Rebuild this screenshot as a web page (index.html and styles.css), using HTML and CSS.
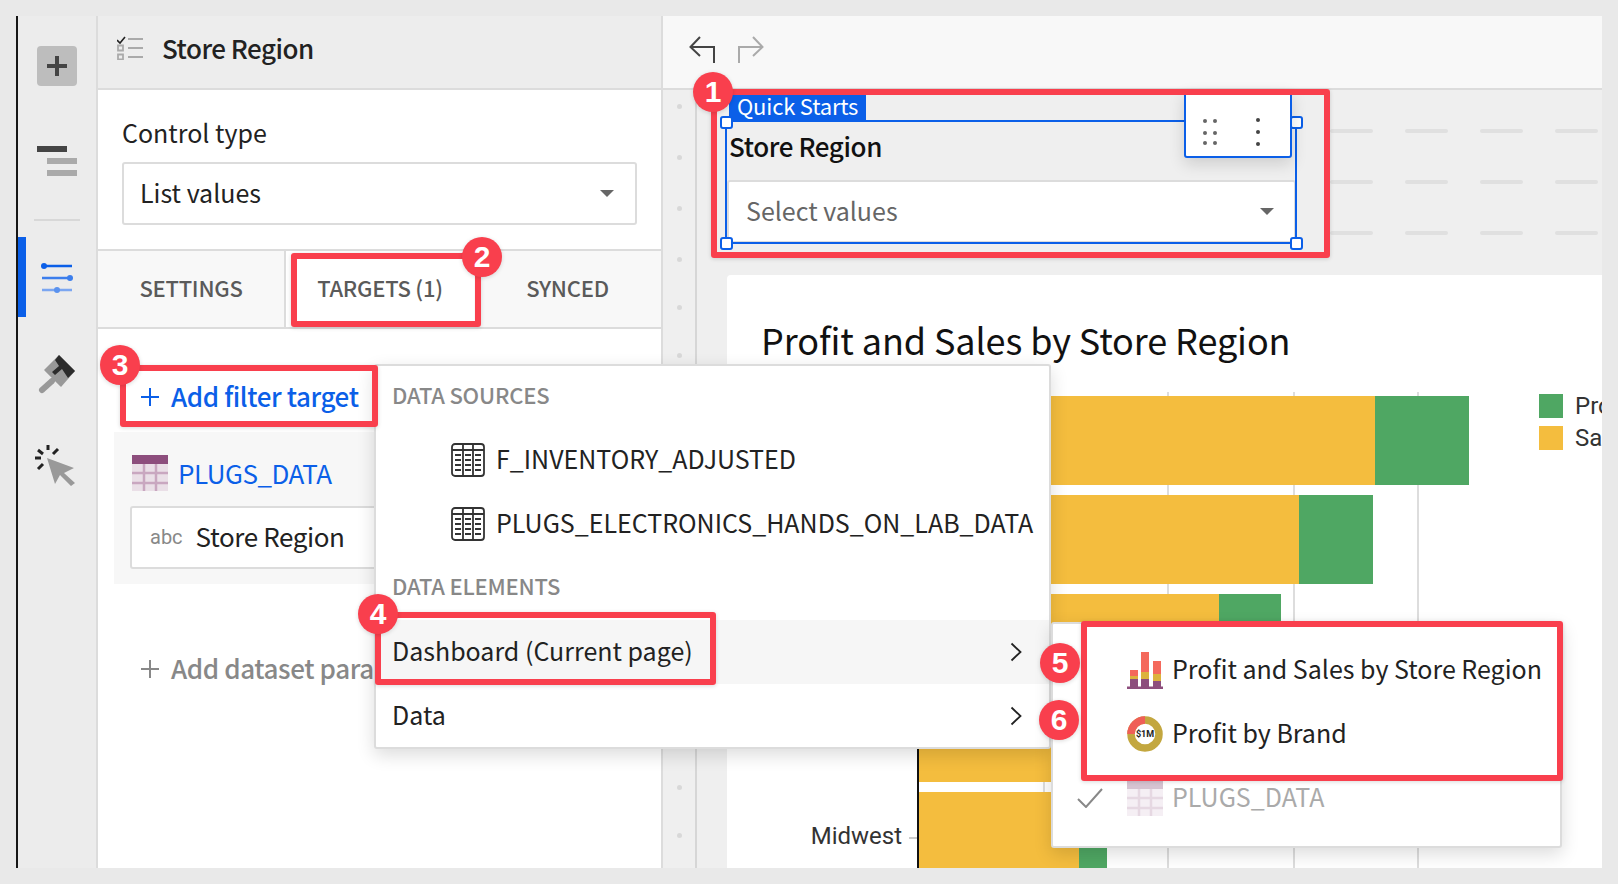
FILE: index.html
```html
<!DOCTYPE html>
<html>
    <head>
        <title>Store Region</title>
        <meta charset="UTF-8">
        <link rel="stylesheet" href="styles.css">
    </head>
    <body>
        <div class="app">
            <nav class="rail">
                <div class="rail_add">
                    <svg width="20" height="20" viewBox="0 0 20 20"><path d="M8 0h4v8h8v4h-8v8H8v-8H0V8h8z" fill="#444"/></svg>
                </div>
                <svg class="rail_layers" width="40" height="30" viewBox="0 0 40 30"><rect width="30" height="6" fill="#444"/><rect x="10" y="12" width="30" height="6" fill="#aaa"/><rect x="10" y="24" width="30" height="6" fill="#aaa"/></svg>
                <div class="rail_rule"></div>
                <div class="rail_active">
                    <svg width="32" height="30" viewBox="0 0 32 30"><path d="M2 3h29" stroke="#0b5fe8" stroke-width="2.500"/><circle cx="3" cy="3" r="3" fill="#0b5fe8"/><path d="M1 15h30" stroke="#3c7eec" stroke-width="2.500"/><circle cx="29" cy="15" r="3" fill="#3c7eec"/><path d="M1 27h30" stroke="#7ba6f1" stroke-width="2.500"/><circle cx="16" cy="27" r="3" fill="#5a92ee"/></svg>
                </div>
                <svg class="rail_brush" width="40" height="40" viewBox="0 0 40 40"><path d="M21 0l16 16-14 16L6 15z" fill="#999"/><path d="M21 0l16 16-7 7-6-9-7 6-3-3 7-6-4-6z" fill="#2c2c2c"/><path d="M7 16l15 15" stroke="#bbb" stroke-width="1"/><path d="M14 26L4 35" stroke="#999" stroke-width="6" stroke-linecap="round"/></svg>
                <svg class="rail_click" width="42" height="42" viewBox="0 0 42 42"><path d="M13 13l27 10-10 5 11 10-4 3-11-11-5 9z" fill="#999"/><path d="M14 0v5M1 13h6M4 5l5 4M24 4l-5 5M4 24l5-5" stroke="#222" stroke-width="3" fill="none"/></svg>
            </nav>

            <section class="panel">
                <header class="panel_head">
                    <svg width="26" height="24" viewBox="0 0 26 24"><path d="M0 4l3 3 5-6" stroke="#222" stroke-width="1.600" fill="none"/><path d="M11 3h15M11 12h15M11 21h15" stroke="#aaa" stroke-width="2"/><path d="M1 9.500h5v5H1zM1 18.500h5v5H1z" stroke="#aaa" stroke-width="1.800" fill="none"/></svg>
                    <h1>Store Region</h1>
                </header>
                <div class="control_type">
                    <label>Control type</label>
                    <div class="select">
                        <span>List values</span>
                        <i class="caret"></i>
                    </div>
                </div>
                <div class="tabs">
                    <div class="tab tab_first">SETTINGS</div>
                    <div class="tab">TARGETS (1)</div>
                    <div class="tab">SYNCED</div>
                </div>
                <div class="add_row add_blue">
                    <svg width="18" height="18" viewBox="0 0 18 18"><path d="M9 0v18M0 9h18" stroke="currentColor" stroke-width="2"/></svg>
                    <span>Add filter target</span>
                </div>
                <div class="target">
                    <div class="target_name">
                        <svg width="36" height="36" viewBox="0 0 36 36"><rect width="36" height="36" fill="#eadfe7"/><rect width="36" height="9" fill="#8d4e7d"/><path d="M0 18h36M0 28h36M12 9v27M24 9v27" stroke="#c9a7c0" stroke-width="2.500"/></svg>
                        <span>PLUGS_DATA</span>
                    </div>
                    <div class="target_field">
                        <span class="abc">abc</span>
                        <span class="field_name">Store Region</span>
                    </div>
                </div>
                <div class="add_row add_gray">
                    <svg width="18" height="18" viewBox="0 0 18 18"><path d="M9 0v18M0 9h18" stroke="currentColor" stroke-width="2"/></svg>
                    <span>Add dataset para</span>
                </div>
            </section>

            <main class="workbook">
                <div class="toolbar">
                    <svg width="26" height="27" viewBox="0 0 26 27"><path d="M25 27V11H2M11 1L1.500 11l9.500 9" stroke="#444" stroke-width="2" fill="none"/></svg>
                    <svg width="26" height="27" viewBox="0 0 26 27"><path d="M1 27V11h23M15 1l9.500 10-9.500 9" stroke="#aaa" stroke-width="2" fill="none"/></svg>
                </div>
                <div class="canvas">
                    <div class="gutter">
                        <i></i><i></i><i></i><i></i><i></i><i></i><i></i><i></i><i></i><i></i><i></i><i></i><i></i><i></i><i></i><i></i>
                    </div>
                    <div class="sheet">
                        <div class="top_area">
                            <div class="control">
                                <div class="control_title">Store Region</div>
                                <div class="select select_values">
                                    <span>Select values</span>
                                    <i class="caret"></i>
                                </div>
                            </div>
                            <div class="dashes">
                                <div class="dash_row"><i></i><i></i><i></i><i></i></div>
                                <div class="dash_row"><i></i><i></i><i></i><i></i></div>
                                <div class="dash_row"><i></i><i></i><i></i><i></i></div>
                            </div>
                        </div>
                        <div class="card">
                            <h2>Profit and Sales by Store Region</h2>
                            <div class="chart">
                                <div class="ylabels"><span class="midwest">Midwest</span></div>
                                <div class="plot">
                                    <i class="grid g1"></i><i class="grid g2"></i><i class="grid g3"></i><i class="grid g4"></i>
                                    <div class="bar"><i class="sales" style="width:456px"></i><i class="profit" style="width:94px"></i></div>
                                    <div class="bar"><i class="sales" style="width:380px"></i><i class="profit" style="width:74px"></i></div>
                                    <div class="bar"><i class="sales" style="width:300px"></i><i class="profit" style="width:62px"></i></div>
                                    <div class="bar"><i class="sales" style="width:300px"></i><i class="profit" style="width:40px"></i></div>
                                    <div class="bar"><i class="sales" style="width:160px"></i><i class="profit" style="width:28px"></i></div>
                                </div>
                                <div class="legend">
                                    <div><i class="profit"></i>Profit</div>
                                    <div><i class="sales"></i>Sales</div>
                                </div>
                            </div>
                        </div>
                    </div>
                </div>
            </main>

            <!-- things on top of the page -->
            <div class="tag">Quick Starts</div>
            <div class="selection"></div>
            <i class="handle h_tl"></i><i class="handle h_tr"></i><i class="handle h_bl"></i><i class="handle h_br"></i>
            <div class="mini_bar">
                <svg width="14" height="26" viewBox="0 0 14 26"><g fill="#666"><circle cx="2" cy="2" r="2"/><circle cx="12" cy="2" r="2"/><circle cx="2" cy="14" r="2"/><circle cx="12" cy="14" r="2"/><circle cx="2" cy="24" r="2"/><circle cx="12" cy="24" r="2"/></g></svg>
                <svg width="4" height="28" viewBox="0 0 4 28"><g fill="#444"><circle cx="2" cy="2" r="2"/><circle cx="2" cy="14" r="2"/><circle cx="2" cy="26" r="2"/></g></svg>
            </div>

            <div class="menu">
                <div class="menu_head menu_head_first">DATA SOURCES</div>
                <div class="menu_item item_indent">
                    <svg class="sheet_icon" width="34" height="34" viewBox="0 0 34 34"><use href="#sheet"/></svg>
                    <span>F_INVENTORY_ADJUSTED</span>
                </div>
                <div class="menu_item item_indent">
                    <svg class="sheet_icon" width="34" height="34" viewBox="0 0 34 34"><use href="#sheet"/></svg>
                    <span>PLUGS_ELECTRONICS_HANDS_ON_LAB_DATA</span>
                </div>
                <div class="menu_head">DATA ELEMENTS</div>
                <div class="menu_item item_hover">
                    <span>Dashboard (Current page)</span>
                    <svg class="chevron" width="12" height="20" viewBox="0 0 12 20"><path d="M1.500 1.500l9 8.500-9 8.500" stroke="#222" stroke-width="1.800" fill="none"/></svg>
                </div>
                <div class="menu_item">
                    <span>Data</span>
                    <svg class="chevron" width="12" height="20" viewBox="0 0 12 20"><path d="M1.500 1.500l9 8.500-9 8.500" stroke="#222" stroke-width="1.800" fill="none"/></svg>
                </div>
            </div>

            <div class="submenu">
                <div class="sub_item">
                    <svg width="36" height="37" viewBox="0 0 36 37"><path d="M3 18h8v6H3zM14 0h8v20h-8zM26 9h8v13h-8z" fill="#f4695c"/><path d="M3 24h8v3H3zM14 20h8v7h-8zM26 22h8v7h-8z" fill="#dcb23c"/><path d="M3 27h8v8H3zM14 27h8v8h-8zM26 29h8v6h-8z" fill="#8d4e7d"/><rect y="34.500" width="36" height="2.500" fill="#8d4e7d"/></svg>
                    <span>Profit and Sales by Store Region</span>
                </div>
                <div class="sub_item">
                    <svg width="36" height="36" viewBox="0 0 36 36"><circle cx="18" cy="18" r="14" fill="none" stroke="#c3a73f" stroke-width="7.500"/><path d="M4 18A14 14 0 0 1 18 4" fill="none" stroke="#ef5f57" stroke-width="7.500"/><text x="18" y="21" text-anchor="middle" class="donut_text">$1M</text></svg>
                    <span>Profit by Brand</span>
                </div>
                <div class="sub_item sub_off">
                    <svg class="check" width="26" height="20" viewBox="0 0 26 20"><path d="M1 11l8 8L25 1" stroke="#888" stroke-width="2" fill="none"/></svg>
                    <svg width="36" height="36" viewBox="0 0 36 36"><rect width="36" height="36" fill="#f5eff4"/><rect width="36" height="9" fill="#d6c3d1"/><path d="M0 18h36M0 28h36M12 9v27M24 9v27" stroke="#e6d8e2" stroke-width="2.500"/></svg>
                    <span>PLUGS_DATA</span>
                </div>
            </div>

            <div class="box box1"></div>
            <div class="box box2"></div>
            <div class="box box3"></div>
            <div class="box box4"></div>
            <div class="box box5"></div>
            <div class="badge b1">1</div>
            <div class="badge b2">2</div>
            <div class="badge b3">3</div>
            <div class="badge b4">4</div>
            <div class="badge b5">5</div>
            <div class="badge b6">6</div>
        </div>

        <svg width="0" height="0" class="defs">
            <symbol id="sheet" viewBox="0 0 34 34">
                <rect x="1" y="1" width="32" height="32" rx="3" fill="none" stroke="#333" stroke-width="1.800"/>
                <path d="M1 7h32M12 1v32M22 1v32" stroke="#333" stroke-width="1.800" fill="none"/>
                <path d="M4 12h6M4 17h6M4 22h6M4 27h6M14 12h6M14 17h6M14 22h6M14 27h6M24 12h6M24 17h6M24 22h6M24 27h6" stroke="#333" stroke-width="1.800"/>
            </symbol>
        </svg>
    </body>
</html>
```

FILE: styles.css
```css
* {
    box-sizing: border-box;
}
html, body {
    margin: 0;
    height: 100%;
    overflow: hidden;
}
body {
    background-color: #e9e9e9;
    font-family: "Noto Sans CJK SC", "Noto Sans", sans-serif;
    color: #222;
}
i {
    display: block;
}
.defs {
    position: absolute;
}
.app {
    position: absolute;
    left: 16px;
    top: 16px;
    width: 1586px;
    height: 852px;
    display: flex;
    overflow: hidden;
    background-color: #fff;
}

/* left rail */
.rail {
    width: 82px;
    flex: none;
    background-color: #ececec;
    border-left: 2px solid #161616;
    border-right: 2px solid #dcdcdc;
    display: flex;
    flex-direction: column;
}
.rail_add {
    width: 40px;
    height: 40px;
    margin: 30px 0 0 19px;
    background-color: #bdbdbd;
    border-radius: 4px;
    display: flex;
    align-items: center;
    justify-content: center;
}
.rail_layers {
    margin: 60px 0 0 19px;
}
.rail_rule {
    height: 2px;
    width: 46px;
    margin: 43px 0 0 16px;
    background-color: #d8d8d8;
}
.rail_active {
    height: 80px;
    margin-top: 16px;
    border-left: 8px solid #0b5fe8;
    padding: 26px 0 0 15px;
}
.rail_brush {
    margin: 38px 0 0 20px;
}
.rail_click {
    margin: 50px 0 0 16px;
}

/* panel */
.panel {
    width: 565px;
    flex: none;
    background-color: #fff;
    border-right: 2px solid #dcdcdc;
    display: flex;
    flex-direction: column;
}
.panel_head {
    height: 74px;
    flex: none;
    background-color: #ededed;
    border-bottom: 2px solid #dcdcdc;
    display: flex;
    align-items: center;
    padding: 0 0 8px 19px;
    gap: 19px;
}
h1 {
    margin: 0;
    font-size: 26px;
    line-height: 34px;
    font-weight: 500;
    letter-spacing: -0.5px;
}
.control_type {
    height: 159px;
    flex: none;
    padding: 24px 24px 0 24px;
}
.control_type label {
    display: block;
    font-size: 25px;
    line-height: 36px;
}
.select {
    height: 63px;
    margin-top: 12px;
    background-color: #fff;
    border: 2px solid #dcdcdc;
    border-radius: 3px;
    display: flex;
    align-items: center;
    justify-content: space-between;
    padding: 0 21px 0 16px;
    font-size: 25px;
}
.select span {
    margin-bottom: 3px;
}
.caret {
    width: 0;
    height: 0;
    border-left: 7px solid transparent;
    border-right: 7px solid transparent;
    border-top: 7px solid #666;
}
.tabs {
    height: 80px;
    flex: none;
    display: flex;
    border-top: 2px solid #dcdcdc;
    border-bottom: 2px solid #dcdcdc;
}
.tab {
    display: flex;
    align-items: center;
    justify-content: center;
    font-size: 22px;
    font-weight: 500;
    color: #5a5a5a;
    letter-spacing: -0.25px;
    padding-bottom: 4px;
}
.tab_first {
    width: 188px;
    background-color: #f8f8f8;
    border-right: 2px solid #dcdcdc;
}
.tab + .tab {
    width: 188px;
}
.tab + .tab + .tab {
    width: 187px;
    background-color: #f8f8f8;
}
.add_row {
    display: flex;
    align-items: center;
    gap: 12px;
    padding-left: 43px;
    font-size: 26px;
    font-weight: 500;
    letter-spacing: -0.4px;
}
.add_row span {
    margin-bottom: 3px;
}
.add_blue {
    height: 103px;
    flex: none;
    padding-top: 33px;
    color: #0b5fe8;
}
.add_gray {
    height: 50px;
    flex: none;
    margin-top: 60px;
    color: #888;
    white-space: nowrap;
}
.target {
    height: 152px;
    flex: none;
    margin: 0 0 0 16px;
    background-color: #f7f7f7;
    padding: 22px 0 0 16px;
}
.target_name {
    display: flex;
    align-items: center;
    gap: 10px;
    font-size: 26px;
    color: #0b5fe8;
    margin-left: 2px;
    letter-spacing: -0.5px;
}
.target_field {
    height: 63px;
    margin-top: 15px;
    background-color: #fff;
    border: 2px solid #dcdcdc;
    border-radius: 3px;
    display: flex;
    align-items: center;
    gap: 13px;
    padding-left: 18px;
    font-size: 26px;
}
.field_name {
    letter-spacing: -0.4px;
    margin-bottom: 4px;
}
.abc {
    font-family: Roboto, sans-serif;
    font-size: 20px;
    color: #888;
    margin-bottom: 2px;
}

/* workbook */
.workbook {
    flex: 1;
    display: flex;
    flex-direction: column;
    min-width: 0;
}
.toolbar {
    height: 74px;
    flex: none;
    background-color: #f8f8f8;
    border-bottom: 2px solid #dcdcdc;
    display: flex;
    align-items: center;
    gap: 23px;
    padding: 0 0 6px 26px;
}
.canvas {
    flex: 1;
    display: flex;
    background-color: #efefef;
    min-height: 0;
}
.gutter {
    width: 34px;
    flex: none;
    border-right: 2px solid #d6d6d6;
    display: flex;
    flex-direction: column;
    align-items: center;
    gap: 43px;
    padding-top: 14px;
    overflow: hidden;
}
.gutter i {
    flex: none;
    width: 5px;
    height: 5px;
    border-radius: 50%;
    background-color: #d8d8d8;
}
.gutter i:nth-child(-n+3) {
    margin-bottom: 3px;
}
.sheet {
    flex: 1;
    min-width: 0;
    display: flex;
    flex-direction: column;
}
.top_area {
    height: 185px;
    flex: none;
    position: relative;
}
.control {
    width: 569px;
    padding: 30px 0 0 0;
    margin-left: 30px;
}
.control_title {
    font-size: 26px;
    line-height: 34px;
    font-weight: 500;
    color: #111;
    padding: 9px 0 0 2px;
    letter-spacing: -0.4px;
}
.select_values {
    height: 63px;
    margin-top: 17px;
    color: #666;
    padding-left: 17px;
    padding-right: 20px;
}
.dashes {
    position: absolute;
    left: 633px;
    top: 39px;
    display: flex;
    flex-direction: column;
    gap: 47px;
}
.dash_row {
    display: flex;
    gap: 32px;
}
.dash_row i {
    width: 43px;
    height: 4px;
    border-radius: 2px;
    background-color: #e0e0e0;
}
.card {
    flex: 1;
    margin-left: 30px;
    background-color: #fff;
    border-radius: 4px 0 0 0;
    min-height: 0;
    overflow: hidden;
    padding: 41px 0 0 34px;
}
h2 {
    margin: 0;
    font-size: 36px;
    line-height: 46px;
    font-weight: 400;
    color: #111;
    letter-spacing: -0.1px;
}
.chart {
    display: flex;
    margin-top: 34px;
}
.ylabels {
    width: 156px;
    flex: none;
    height: 480px;
    position: relative;
    font-family: Roboto, sans-serif;
    font-size: 24px;
    color: #333;
}
.midwest {
    position: absolute;
    right: 15px;
    top: 426px;
}
.midwest::after {
    content: "";
    position: absolute;
    left: 100%;
    top: 15px;
    margin-left: 7px;
    width: 8px;
    height: 2px;
    background-color: #ccc;
}
.plot {
    width: 620px;
    flex: none;
    position: relative;
    border-left: 2px solid #111;
    display: flex;
    flex-direction: column;
    gap: 10px;
}
.grid {
    position: absolute;
    top: -4px;
    height: 500px;
    width: 2px;
    background-color: #ddd;
}
.g1 { left: 124px; }
.g2 { left: 248px; }
.g3 { left: 374px; }
.g4 { left: 498px; }
.bar {
    height: 89px;
    flex: none;
    display: flex;
    position: relative;
}
.sales {
    background-color: #f4bd3e;
}
.profit {
    background-color: #4fa763;
}
.legend {
    flex: none;
    margin: -2px 0 0 2px;
    font-family: Roboto, sans-serif;
    font-size: 24px;
    color: #333;
    display: flex;
    flex-direction: column;
    gap: 8px;
}
.legend div {
    display: flex;
    align-items: center;
    gap: 12px;
    line-height: 24px;
}
.legend i {
    width: 24px;
    height: 24px;
}

/* popups */
.tag {
    position: absolute;
    left: 713px;
    top: 79px;
    width: 137px;
    height: 26px;
    background-color: #0b5fe8;
    color: #fff;
    font-size: 22px;
    line-height: 20px;
    padding-left: 8px;
    letter-spacing: -0.2px;
}
.selection {
    position: absolute;
    left: 709px;
    top: 104px;
    width: 572px;
    height: 124px;
    border: 2px solid #0b5fe8;
}
.handle {
    position: absolute;
    width: 13px;
    height: 13px;
    background-color: #fff;
    border: 2px solid #0b5fe8;
    border-radius: 3px;
}
.h_tl { left: 704px; top: 100px; }
.h_tr { left: 1274px; top: 100px; }
.h_bl { left: 704px; top: 221px; }
.h_br { left: 1274px; top: 221px; }
.mini_bar {
    position: absolute;
    left: 1168px;
    top: 74px;
    width: 108px;
    height: 68px;
    background-color: #fff;
    border: 2px solid #0b5fe8;
    border-radius: 3px;
    box-shadow: 0 6px 16px rgba(0, 0, 0, 0.14);
    display: flex;
    align-items: center;
    gap: 39px;
    padding: 16px 0 0 17px;
}
.menu {
    position: absolute;
    left: 358px;
    top: 348px;
    width: 677px;
    height: 385px;
    background-color: #fff;
    border: 2px solid #dcdcdc;
    border-radius: 3px;
    box-shadow: 0 6px 18px rgba(0, 0, 0, 0.14);
    font-size: 25px;
}
.menu_head {
    height: 64px;
    display: flex;
    align-items: center;
    padding: 0 0 6px 16px;
    font-size: 22px;
    font-weight: 500;
    color: #888;
    letter-spacing: -0.2px;
    white-space: nowrap;
}
.menu_head_first {
    height: 62px;
}
.menu_item {
    height: 64px;
    display: flex;
    align-items: center;
    justify-content: space-between;
    padding: 0 27px 0 16px;
    white-space: nowrap;
}
.menu_item span {
    margin-bottom: 4px;
}
.item_indent {
    justify-content: flex-start;
    gap: 11px;
    padding-left: 75px;
}
.sheet_icon {
    flex: none;
}
.item_hover {
    background-color: #f6f6f6;
}
.submenu {
    position: absolute;
    left: 1035px;
    top: 606px;
    width: 511px;
    height: 226px;
    background-color: #fff;
    border: 2px solid #dcdcdc;
    border-radius: 3px;
    box-shadow: 0 6px 18px rgba(0, 0, 0, 0.14);
    font-size: 25px;
    padding-top: 14px;
}
.sub_item {
    height: 64px;
    display: flex;
    align-items: center;
    gap: 9px;
    padding-left: 74px;
    white-space: nowrap;
}
.sub_item span {
    margin-bottom: 4px;
}
.sub_off {
    color: #aaa;
    position: relative;
}
.check {
    position: absolute;
    left: 24px;
    top: 22px;
}
.donut_text {
    font-family: Roboto, sans-serif;
    font-size: 9px;
    font-weight: 700;
    fill: #222;
}
.box {
    position: absolute;
    border: 6px solid #f93f4d;
    border-radius: 3px;
    box-shadow: 0 1px 4px rgba(0, 0, 0, 0.15);
}
.box1 { left: 695px; top: 73px; width: 619px; height: 169px; }
.box2 { left: 275px; top: 237px; width: 190px; height: 74px; }
.box3 { left: 104px; top: 349px; width: 258px; height: 62px; }
.box4 { left: 359px; top: 596px; width: 341px; height: 73px; }
.box5 { left: 1065px; top: 605px; width: 482px; height: 160px; }
.badge {
    position: absolute;
    width: 40px;
    height: 40px;
    border-radius: 50%;
    background-color: #f93f4d;
    color: #fff;
    font-family: "Liberation Sans", sans-serif;
    font-size: 30px;
    font-weight: 700;
    line-height: 40px;
    text-align: center;
    box-shadow: 0 1px 4px rgba(0, 0, 0, 0.15);
}
.b1 { left: 677px; top: 56px; }
.b2 { left: 446px; top: 221px; }
.b3 { left: 84px; top: 329px; }
.b4 { left: 342px; top: 578px; }
.b5 { left: 1024px; top: 627px; }
.b6 { left: 1023px; top: 684px; }
```
